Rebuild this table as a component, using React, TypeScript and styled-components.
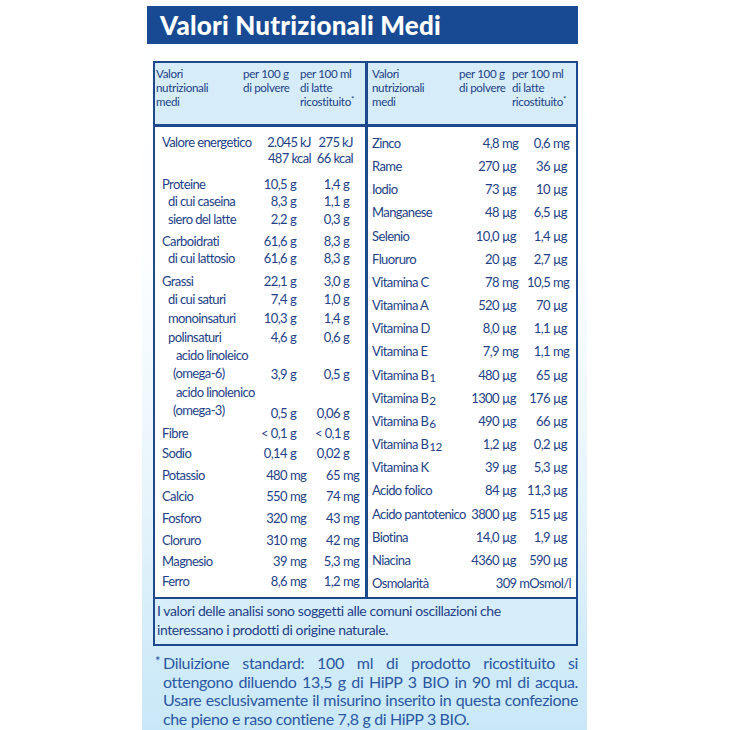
import styled, { createGlobalStyle } from 'styled-components';
import type { ReactNode } from 'react';

const GlobalStyle = createGlobalStyle`
  html, body {
    margin: 0;
    padding: 0;
    background: #ffffff;
  }
  body {
    font-family: 'Lato', 'Liberation Sans', sans-serif;
  }
`;

const NAVY = '#1d4a8c';
const INK = '#233f86';

const Page = styled.div`
  width: 730px;
  height: 730px;
  overflow: hidden;
  display: flex;
`;

const Panel = styled.div`
  margin-left: 142px;
  width: 445px;
  height: 730px;
  padding-top: 6px;
  box-sizing: border-box;
  background: linear-gradient(180deg, #ffffff 0%, #fcfeff 35%, #e6f4fb 70%, #d2ecf9 88%, #c9e8f7 100%);
`;

const TitleBar = styled.div`
  margin-left: 5px;
  width: 431px;
  height: 38px;
  background: #174a93;
  display: flex;
  align-items: center;
  padding-left: 13px;
  box-sizing: border-box;
`;

const Title = styled.h1`
  margin: 0;
  color: #ffffff;
  font-size: 26px;
  font-weight: 900;
  letter-spacing: 0.2px;
  line-height: 1;
`;

const Table = styled.div`
  margin: 17px 0 0 11px;
  width: 425px;
  border: 2px solid ${NAVY};
  box-sizing: border-box;
  color: ${INK};
  font-size: 13px;
  letter-spacing: -0.6px;
`;

const Band = styled.div<{ $bg: string; $divider: number }>`
  display: grid;
  grid-template-columns: 210px 208px;
  background: ${(p) => p.$bg};
  border-bottom: ${(p) => p.$divider}px solid ${NAVY};
`;

const Half = styled.div<{ $right?: boolean }>`
  border-left: ${(p) => (p.$right ? `3px solid ${NAVY}` : 'none')};
`;

const HeadGrid = styled.div<{ $cols: string; $pad: number }>`
  display: grid;
  grid-template-columns: ${(p) => p.$cols};
  padding: 4px 0 6px ${(p) => p.$pad}px;
  line-height: 14px;
  height: 61px;
  box-sizing: border-box;
  font-size: 11.6px;
  letter-spacing: -0.35px;
`;

const HeadCell = styled.div``;

const Star = styled.span`
  font-size: 8px;
  vertical-align: 4px;
  line-height: 0;
`;

const Body = styled.div<{ $pl: number }>`
  padding: 7px 5px 7px ${(p) => p.$pl}px;
  height: 470px;
  box-sizing: border-box;
`;

const Row = styled.div<{ $cols: string; $h: number; $lh: number }>`
  display: grid;
  grid-template-columns: ${(p) => p.$cols};
  height: ${(p) => p.$h}px;
  line-height: ${(p) => p.$lh}px;
  align-items: start;
`;

const Name = styled.div<{ $indent: number }>`
  padding-left: ${(p) => (p.$indent === 2 ? 11 : p.$indent * 6)}px;
  text-indent: ${(p) => (p.$indent === 2 ? 3 : 0)}px;
  white-space: nowrap;
`;

const Num = styled.div<{ $line: number }>`
  grid-row: ${(p) => p.$line};
  text-align: right;
  white-space: nowrap;
`;

const Unit = styled.div<{ $line: number }>`
  grid-row: ${(p) => p.$line};
  padding-left: 3px;
  white-space: nowrap;
`;

const Span = styled.div<{ $from: number; $to: number; $pr: number }>`
  grid-column: ${(p) => p.$from} / ${(p) => p.$to};
  text-align: right;
  padding-right: ${(p) => p.$pr}px;
  white-space: nowrap;
`;

const NameCol = styled.div`
  grid-column: 1;
  grid-row: 1 / span 2;
`;

const Sub = styled.span`
  font-size: 0.9em;
  vertical-align: -2px;
  margin-left: 1px;
  line-height: 0;
`;

const Note = styled.div`
  background: #d7eefa;
  padding: 2px 4px 5px 2px;
  font-size: 14px;
  letter-spacing: -0.4px;
  line-height: 19px;
`;

const Footnote = styled.div`
  margin: 8px 0 0 13px;
  width: 423px;
  position: relative;
  padding-left: 8px;
  box-sizing: border-box;
  color: #2b57a2;
  font-size: 16px;
  letter-spacing: -0.35px;
  line-height: 18.5px;
`;

const FootLine = styled.div<{ $justify?: boolean }>`
  white-space: nowrap;
  text-align: ${(p) => (p.$justify ? 'justify' : 'left')};
  text-align-last: ${(p) => (p.$justify ? 'justify' : 'left')};
`;

const FootStar = styled.span`
  position: absolute;
  left: 0;
  top: -2px;
  font-size: 13px;
`;

type Val = [string, string];

type Item = {
  name: ReactNode;
  indent?: number;
  h: number;
  lines?: number;
  v1?: Val;
  v2?: Val;
  energy?: boolean;
  span?: string;
};

const LEFT_COLS = '93px 32px 28px 25px 20px';
const RIGHT_COLS = '94px 33px 28px 23px 21px';

const leftRows: Item[] = [
  { name: 'Valore energetico', h: 41, energy: true },
  { name: 'Proteine', h: 17, v1: ['10,5', 'g'], v2: ['1,4', 'g'] },
  { name: 'di cui caseina', indent: 1, h: 18, v1: ['8,3', 'g'], v2: ['1,1', 'g'] },
  { name: 'siero del latte', indent: 1, h: 22, v1: ['2,2', 'g'], v2: ['0,3', 'g'] },
  { name: 'Carboidrati', h: 17, v1: ['61,6', 'g'], v2: ['8,3', 'g'] },
  { name: 'di cui lattosio', indent: 1, h: 23, v1: ['61,6', 'g'], v2: ['8,3', 'g'] },
  { name: 'Grassi', h: 18, v1: ['22,1', 'g'], v2: ['3,0', 'g'] },
  { name: 'di cui saturi', indent: 1, h: 19, v1: ['7,4', 'g'], v2: ['1,0', 'g'] },
  { name: 'monoinsaturi', indent: 1, h: 19, v1: ['10,3', 'g'], v2: ['1,4', 'g'] },
  { name: 'polinsaturi', indent: 1, h: 18, v1: ['4,6', 'g'], v2: ['0,6', 'g'] },
  {
    name: (
      <>
        acido linoleico
        <br />
        (omega-6)
      </>
    ),
    indent: 2,
    lines: 2,
    h: 37,
    v1: ['3,9', 'g'],
    v2: ['0,5', 'g'],
  },
  {
    name: (
      <>
        acido linolenico
        <br />
        (omega-3)
      </>
    ),
    indent: 2,
    lines: 2,
    h: 41,
    v1: ['0,5', 'g'],
    v2: ['0,06', 'g'],
  },
  { name: 'Fibre', h: 20, v1: ['< 0,1', 'g'], v2: ['< 0,1', 'g'] },
  { name: 'Sodio', h: 22, v1: ['0,14', 'g'], v2: ['0,02', 'g'] },
  { name: 'Potassio', h: 21, v1: ['480', 'mg'], v2: ['65', 'mg'] },
  { name: 'Calcio', h: 22, v1: ['550', 'mg'], v2: ['74', 'mg'] },
  { name: 'Fosforo', h: 22, v1: ['320', 'mg'], v2: ['43', 'mg'] },
  { name: 'Cloruro', h: 21, v1: ['310', 'mg'], v2: ['42', 'mg'] },
  { name: 'Magnesio', h: 20, v1: ['39', 'mg'], v2: ['5,3', 'mg'] },
  { name: 'Ferro', h: 18, v1: ['8,6', 'mg'], v2: ['1,2', 'mg'] },
];

const vit = (s: string) => (
  <>
    Vitamina B<Sub>{s}</Sub>
  </>
);

const RH = 23.16;

const rightRows: Item[] = [
  { name: 'Zinco', h: RH, v1: ['4,8', 'mg'], v2: ['0,6', 'mg'] },
  { name: 'Rame', h: RH, v1: ['270', 'µg'], v2: ['36', 'µg'] },
  { name: 'Iodio', h: RH, v1: ['73', 'µg'], v2: ['10', 'µg'] },
  { name: 'Manganese', h: RH, v1: ['48', 'µg'], v2: ['6,5', 'µg'] },
  { name: 'Selenio', h: RH, v1: ['10,0', 'µg'], v2: ['1,4', 'µg'] },
  { name: 'Fluoruro', h: RH, v1: ['20', 'µg'], v2: ['2,7', 'µg'] },
  { name: 'Vitamina C', h: RH, v1: ['78', 'mg'], v2: ['10,5', 'mg'] },
  { name: 'Vitamina A', h: RH, v1: ['520', 'µg'], v2: ['70', 'µg'] },
  { name: 'Vitamina D', h: RH, v1: ['8,0', 'µg'], v2: ['1,1', 'µg'] },
  { name: 'Vitamina E', h: RH, v1: ['7,9', 'mg'], v2: ['1,1', 'mg'] },
  { name: vit('1'), h: RH, v1: ['480', 'µg'], v2: ['65', 'µg'] },
  { name: vit('2'), h: RH, v1: ['1300', 'µg'], v2: ['176', 'µg'] },
  { name: vit('6'), h: RH, v1: ['490', 'µg'], v2: ['66', 'µg'] },
  { name: vit('12'), h: RH, v1: ['1,2', 'µg'], v2: ['0,2', 'µg'] },
  { name: 'Vitamina K', h: RH, v1: ['39', 'µg'], v2: ['5,3', 'µg'] },
  { name: 'Acido folico', h: RH, v1: ['84', 'µg'], v2: ['11,3', 'µg'] },
  { name: 'Acido pantotenico', h: RH, v1: ['3800', 'µg'], v2: ['515', 'µg'] },
  { name: 'Biotina', h: RH, v1: ['14,0', 'µg'], v2: ['1,9', 'µg'] },
  { name: 'Niacina', h: RH, v1: ['4360', 'µg'], v2: ['590', 'µg'] },
  { name: 'Osmolarità', h: 18, span: '309 mOsmol/l' },
];

const NutrientRow = ({ item, cols }: { item: Item; cols: string }) => {
  const line = item.lines ?? 1;
  if (item.energy) {
    return (
      <Row $cols={cols} $h={item.h} $lh={16}>
        <NameCol>{item.name}</NameCol>
        <Span $from={2} $to={4} $pr={4}>
          2.045 kJ
          <br />
          487 kcal
        </Span>
        <Span $from={4} $to={6} $pr={7}>
          275 kJ
          <br />
          66 kcal
        </Span>
      </Row>
    );
  }
  return (
    <Row $cols={cols} $h={item.h} $lh={18}>
      <NameCol>
        <Name $indent={item.indent ?? 0}>{item.name}</Name>
      </NameCol>
      {item.span && (
        <Span $from={2} $to={6} $pr={-2}>
          {item.span}
        </Span>
      )}
      {item.v1 && (
        <>
          <Num $line={line}>{item.v1[0]}</Num>
          <Unit $line={line}>{item.v1[1]}</Unit>
        </>
      )}
      {item.v2 && (
        <>
          <Num $line={line}>{item.v2[0]}</Num>
          <Unit $line={line}>{item.v2[1]}</Unit>
        </>
      )}
    </Row>
  );
};

const HeaderHalf = ({ cols, pad }: { cols: string; pad: number }) => (
  <HeadGrid $cols={cols} $pad={pad}>
    <HeadCell>
      Valori
      <br />
      nutrizionali
      <br />
      medi
    </HeadCell>
    <HeadCell>
      per 100 g
      <br />
      di polvere
    </HeadCell>
    <HeadCell>
      per 100 ml
      <br />
      di latte
      <br />
      ricostituito<Star>*</Star>
    </HeadCell>
  </HeadGrid>
);

export default function App() {
  return (
    <Page>
      <GlobalStyle />
      <Panel>
        <TitleBar>
          <Title>Valori Nutrizionali Medi</Title>
        </TitleBar>
        <Table>
          <Band $bg="#d6edf9" $divider={3}>
            <Half>
              <HeaderHalf cols="87px 57px 65px" pad={1} />
            </Half>
            <Half $right>
              <HeaderHalf cols="87px 53px 64px" pad={4} />
            </Half>
          </Band>
          <Band $bg="#ffffff" $divider={2}>
            <Half>
              <Body $pl={7}>
                {leftRows.map((r, i) => (
                  <NutrientRow key={i} item={r} cols={LEFT_COLS} />
                ))}
              </Body>
            </Half>
            <Half $right>
              <Body $pl={4}>
                {rightRows.map((r, i) => (
                  <NutrientRow key={i} item={r} cols={RIGHT_COLS} />
                ))}
              </Body>
            </Half>
          </Band>
          <Note>
            I valori delle analisi sono soggetti alle comuni oscillazioni che
            <br />
            interessano i prodotti di origine naturale.
          </Note>
        </Table>
        <Footnote>
          <FootStar>*</FootStar>
          <FootLine $justify>Diluizione standard: 100 ml di prodotto ricostituito si</FootLine>
          <FootLine $justify>ottengono diluendo 13,5 g di HiPP 3 BIO in 90 ml di acqua.</FootLine>
          <FootLine $justify>Usare esclusivamente il misurino inserito in questa confezione</FootLine>
          <FootLine>che pieno e raso contiene 7,8 g di HiPP 3 BIO.</FootLine>
        </Footnote>
      </Panel>
    </Page>
  );
}
